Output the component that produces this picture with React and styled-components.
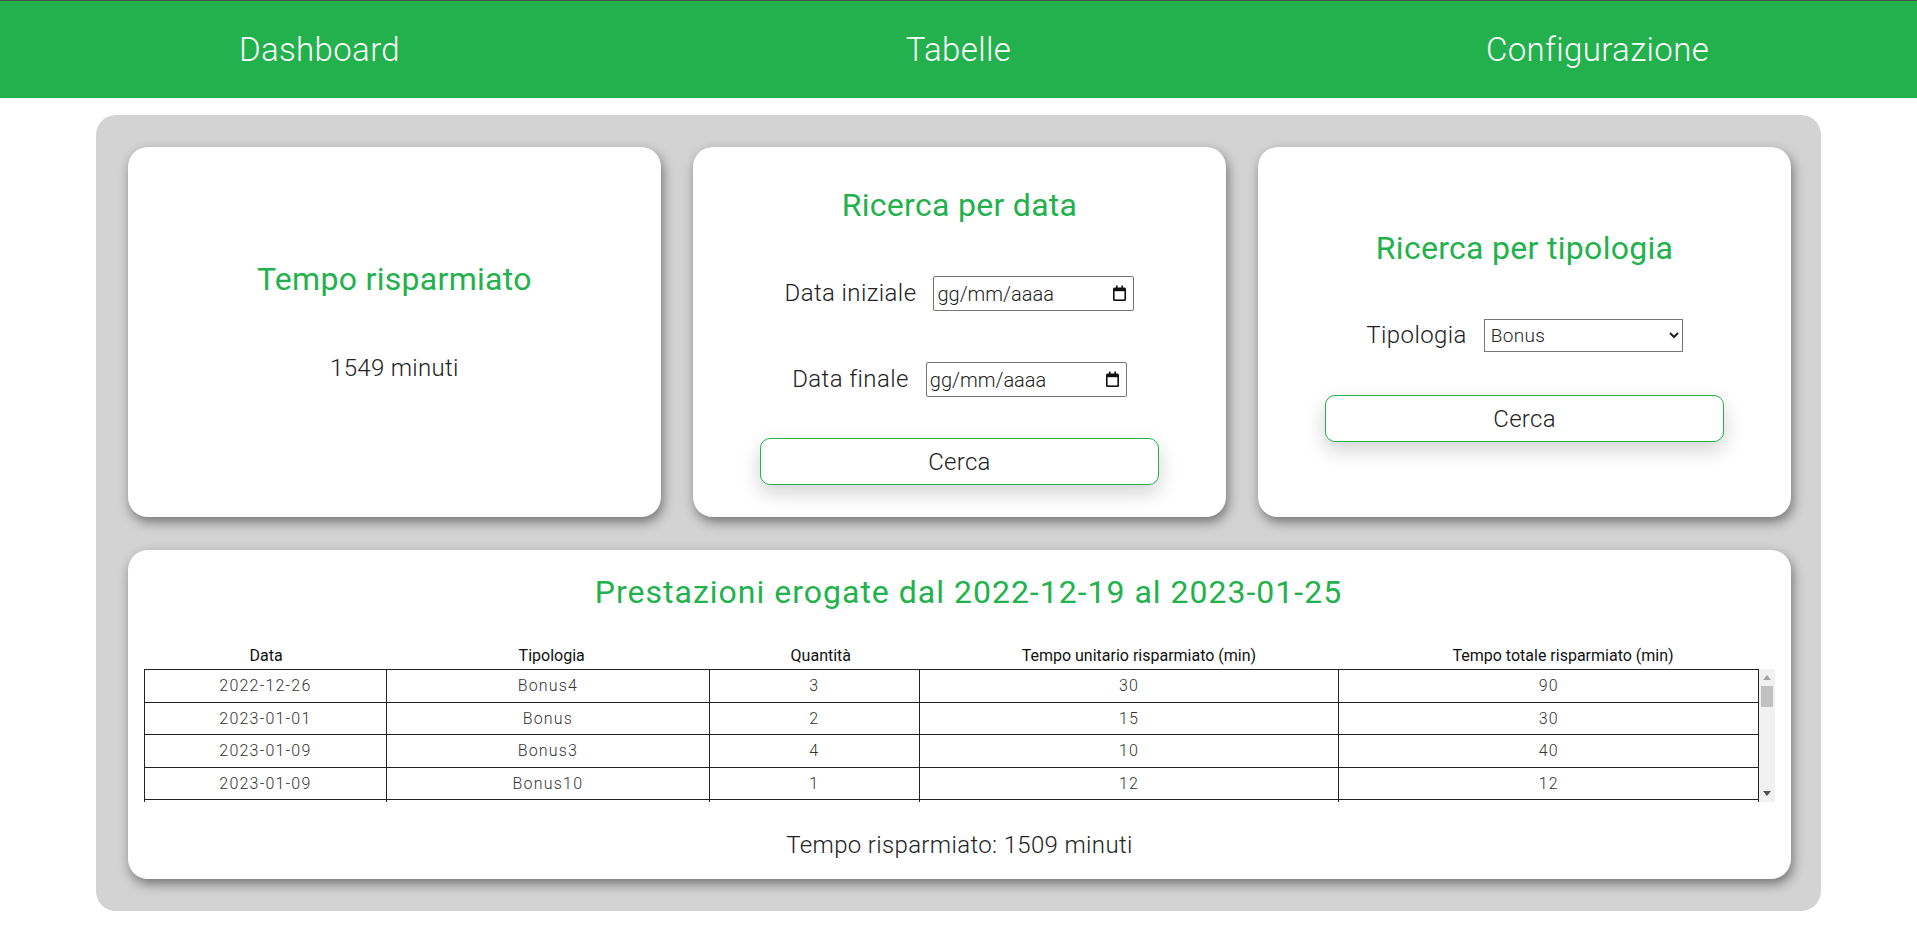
import React from "react";
import styled, { createGlobalStyle } from "styled-components";

const GREEN = "#22b14c";
const FONT = `Roboto, "Noto Sans", "Liberation Sans", sans-serif`;

const GlobalStyle = createGlobalStyle`
  html, body { margin: 0; padding: 0; background: #ffffff; }
  body { font-family: ${FONT}; color: #222; }
  * { box-sizing: border-box; }
`;

const Header = styled.header`
  display: flex;
  height: 98px;
  background: ${GREEN};
  border-top: 1px solid #4d4d4d;
`;

const NavItem = styled.a`
  flex: 1;
  display: flex;
  align-items: center;
  justify-content: center;
  color: #ffffff;
  font-size: 33px;
  font-weight: 300;
  letter-spacing: 0.35px;
  line-height: 38px;
  text-decoration: none;
  cursor: pointer;
`;

const Main = styled.main`
  width: 90%;
  margin: 17px auto 0;
  background: #d3d3d3;
  border-radius: 20px;
  padding: 32px 30px 32px 32px;
  display: flex;
  flex-direction: column;
  gap: 33px;
`;

const CardRow = styled.div`
  display: grid;
  grid-template-columns: repeat(3, 1fr);
  gap: 32px;
`;

const Card = styled.section`
  background: #ffffff;
  border-radius: 20px;
  box-shadow: 2px 5px 12px rgba(0, 0, 0, 0.45);
  height: 370px;
  padding-top: 7px;
  display: flex;
  flex-direction: column;
  align-items: center;
  justify-content: center;
`;

const Title = styled.h2`
  margin: 0;
  color: ${GREEN};
  font-size: 32px;
  font-weight: 400;
  letter-spacing: 0.3px;
  line-height: 38px;
  text-align: center;
`;

const Value = styled.p`
  margin: 56px 0 28px;
  font-size: 24px;
  font-weight: 300;
  letter-spacing: 0.3px;
  line-height: 29px;
  color: #222;
`;

const Form = styled.div`
  display: flex;
  flex-direction: column;
  align-items: center;
  width: 100%;
  margin-top: ${(p) => p.$top}px;
`;

const FieldRow = styled.label`
  display: flex;
  align-items: center;
  gap: 17px;
  margin-bottom: ${(p) => p.$bottom}px;
`;

const FieldLabel = styled.span`
  font-size: 24px;
  font-weight: 300;
  letter-spacing: 0.4px;
  line-height: 29px;
  color: #222;
`;

const DateField = styled.div`
  width: 201px;
  height: 35px;
  border: 1px solid #767676;
  border-radius: 2px;
  background: #fff;
  display: flex;
  align-items: center;
  justify-content: space-between;
  padding: 0 6px 0 3px;
  font-size: 20px;
  font-weight: 300;
  color: #222;
`;

const Select = styled.select`
  width: 199px;
  height: 33px;
  border: 1px solid #767676;
  border-radius: 0;
  background: #fff;
  font-family: ${FONT};
  font-size: 19px;
  font-weight: 300;
  letter-spacing: 0.3px;
  color: #222;
  padding: 0 2px;
`;

const Button = styled.button`
  width: 75%;
  height: 47px;
  background: #fff;
  border: 1px solid ${GREEN};
  border-radius: 10px;
  box-shadow: 0 8px 20px rgba(0, 0, 0, 0.18);
  font-family: ${FONT};
  font-size: 24px;
  font-weight: 300;
  letter-spacing: 0.3px;
  color: #222;
  cursor: pointer;
`;

const WideCard = styled.section`
  background: #ffffff;
  border-radius: 20px;
  box-shadow: 2px 5px 12px rgba(0, 0, 0, 0.45);
  height: 329px;
  padding: 23px 16px 19px;
  display: flex;
  flex-direction: column;
`;

const WideTitle = styled(Title)`
  margin-bottom: 30px;
  padding-left: 18px;
  letter-spacing: 1px;
`;

const Table = styled.table`
  width: 100%;
  border-collapse: collapse;
  table-layout: fixed;
`;

const Th = styled.th`
  height: 28px;
  padding: 0;
  font-size: 16px;
  font-weight: 400;
  color: #111;
  text-align: center;
  vertical-align: middle;
`;

const BodyArea = styled.div`
  display: flex;
  height: 133px;
`;

const Scroll = styled.div`
  flex: 1;
  height: 100%;
  overflow-y: scroll;
  scrollbar-width: none;
  &::-webkit-scrollbar { display: none; }
`;

const ScrollBar = styled.div`
  width: 16px;
  height: 100%;
  background: #f1f1f1;
  display: flex;
  flex-direction: column;
`;

const ScrollArrow = styled.div`
  height: 17px;
  display: flex;
  align-items: center;
  justify-content: center;
  flex-shrink: 0;
`;

const ScrollTrack = styled.div`
  flex: 1;
  padding: 0 2px;
`;

const ScrollThumb = styled.div`
  background: #c1c1c1;
  width: 100%;
`;

const Td = styled.td`
  height: 32.5px;
  padding: 0;
  border: 1px solid #222;
  font-size: 16px;
  font-weight: 300;
  letter-spacing: 1.2px;
  color: #333;
  text-align: center;
  vertical-align: middle;
`;

const Footer = styled.p`
  margin: 29px 0 0;
  font-size: 24px;
  font-weight: 300;
  letter-spacing: 0.35px;
  line-height: 29px;
  text-align: center;
  color: #222;
`;

const CalendarIcon = () => (
  <svg width="15" height="17" viewBox="0 0 15 17" aria-hidden="true">
    <rect x="4" y="0.5" width="1.6" height="3" fill="#111" />
    <rect x="9.4" y="0.5" width="1.6" height="3" fill="#111" />
    <rect x="1" y="2.5" width="13" height="13.5" rx="1.5" fill="#111" />
    <rect x="2.6" y="6.2" width="9.8" height="8.2" fill="#fff" />
  </svg>
);

const Arrow = ({ down }) => (
  <svg width="8" height="5" viewBox="0 0 8 5" aria-hidden="true">
    <path d={down ? "M0 0h8L4 5z" : "M0 5h8L4 0z"} fill={down ? "#505050" : "#a3a3a3"} />
  </svg>
);

const COLS = [15, 20, 13, 26, 26];
const HEAD = ["Data", "Tipologia", "Quantità", "Tempo unitario risparmiato (min)", "Tempo totale risparmiato (min)"];

const ROWS = [
  ["2022-12-26", "Bonus4", 3, 30],
  ["2023-01-01", "Bonus", 2, 15],
  ["2023-01-09", "Bonus3", 4, 10],
  ["2023-01-09", "Bonus10", 1, 12],
  ["2023-01-10", "Bonus2", 5, 20],
  ["2023-01-11", "Bonus", 3, 15],
  ["2023-01-12", "Bonus5", 6, 25],
  ["2023-01-13", "Bonus4", 2, 30],
  ["2023-01-14", "Bonus7", 4, 18],
  ["2023-01-16", "Bonus3", 7, 10],
  ["2023-01-17", "Bonus8", 3, 35],
  ["2023-01-18", "Bonus", 8, 15],
  ["2023-01-19", "Bonus6", 5, 22],
  ["2023-01-20", "Bonus10", 9, 12],
  ["2023-01-21", "Bonus2", 4, 20],
  ["2023-01-23", "Bonus9", 6, 14],
  ["2023-01-24", "Bonus5", 3, 25],
  ["2023-01-24", "Bonus4", 2, 30],
  ["2023-01-25", "Bonus9", 7, 14],
];

const Cols = () => (
  <colgroup>
    {COLS.map((w, i) => (
      <col key={i} style={{ width: `${w}%` }} />
    ))}
  </colgroup>
);

const VIEW_H = 133;
const ROW_H = 32.25;
const TRACK_H = VIEW_H - 34;

export default function App() {
  const total = ROWS.reduce((s, r) => s + r[2] * r[3], 0);
  const thumbH = Math.max(18, Math.round((VIEW_H / (ROWS.length * ROW_H)) * TRACK_H));
  return (
    <>
      <GlobalStyle />
      <Header>
        <NavItem>Dashboard</NavItem>
        <NavItem>Tabelle</NavItem>
        <NavItem>Configurazione</NavItem>
      </Header>
      <Main>
        <CardRow>
          <Card>
            <Title>Tempo risparmiato</Title>
            <Value>1549 minuti</Value>
          </Card>
          <Card>
            <Title>Ricerca per data</Title>
            <Form $top={52}>
              <FieldRow $bottom={51}>
                <FieldLabel>Data iniziale</FieldLabel>
                <DateField>
                  <span>gg/mm/aaaa</span>
                  <CalendarIcon />
                </DateField>
              </FieldRow>
              <FieldRow $bottom={41}>
                <FieldLabel>Data finale</FieldLabel>
                <DateField>
                  <span>gg/mm/aaaa</span>
                  <CalendarIcon />
                </DateField>
              </FieldRow>
              <Button>Cerca</Button>
            </Form>
          </Card>
          <Card>
            <Title>Ricerca per tipologia</Title>
            <Form $top={52}>
              <FieldRow $bottom={43}>
                <FieldLabel>Tipologia</FieldLabel>
                <Select defaultValue="Bonus">
                  <option>Bonus</option>
                  <option>Bonus2</option>
                  <option>Bonus3</option>
                  <option>Bonus4</option>
                </Select>
              </FieldRow>
              <Button>Cerca</Button>
            </Form>
          </Card>
        </CardRow>
        <WideCard>
          <WideTitle>Prestazioni erogate dal 2022-12-19 al 2023-01-25</WideTitle>
          <Table>
            <Cols />
            <thead>
              <tr>
                {HEAD.map((h) => (
                  <Th key={h}>{h}</Th>
                ))}
              </tr>
            </thead>
          </Table>
          <BodyArea>
            <Scroll>
              <Table>
                <Cols />
                <tbody>
                  {ROWS.map((r, i) => (
                    <tr key={i}>
                      <Td>{r[0]}</Td>
                      <Td>{r[1]}</Td>
                      <Td>{r[2]}</Td>
                      <Td>{r[3]}</Td>
                      <Td>{r[2] * r[3]}</Td>
                    </tr>
                  ))}
                </tbody>
              </Table>
            </Scroll>
            <ScrollBar>
              <ScrollArrow>
                <Arrow />
              </ScrollArrow>
              <ScrollTrack>
                <ScrollThumb style={{ height: thumbH }} />
              </ScrollTrack>
              <ScrollArrow>
                <Arrow down />
              </ScrollArrow>
            </ScrollBar>
          </BodyArea>
          <Footer>Tempo risparmiato: {total} minuti</Footer>
        </WideCard>
      </Main>
    </>
  );
}
